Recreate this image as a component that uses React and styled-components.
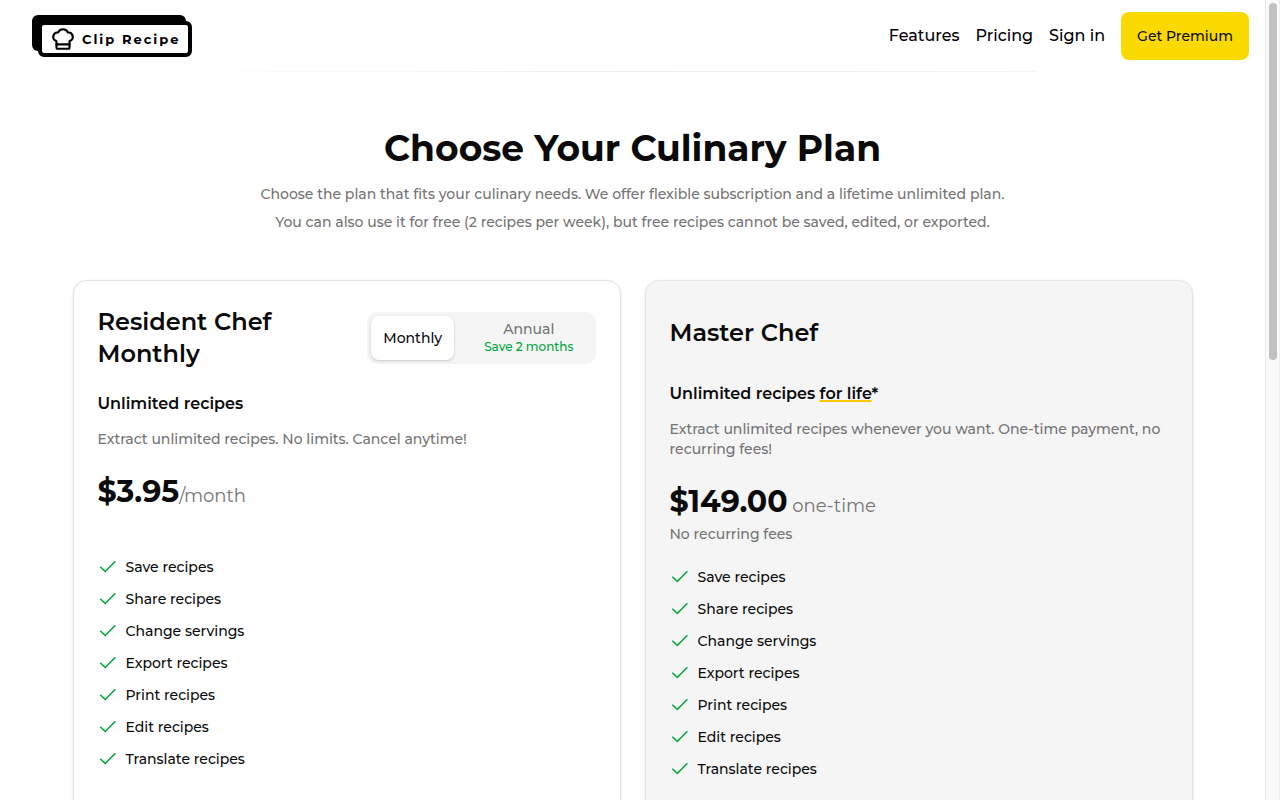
import { useState } from "react";
import styled, { createGlobalStyle } from "styled-components";
import { ChefHat } from "lucide-react";

const GlobalStyle = createGlobalStyle`
  * {
    box-sizing: border-box;
  }

  body {
    margin: 0;
    background-color: #ffffff;
    color: #0a0a0a;
    font-family: Montserrat, Inter, "Liberation Sans", sans-serif;
    font-size: 14px;
    font-weight: 500;
  }

  h1, h2, h3, p, ul {
    margin: 0;
    padding: 0;
  }

  a {
    color: inherit;
    text-decoration: none;
  }
`;

const Page = styled.div`
  display: flex;
  height: 100vh;
  overflow: hidden;
`;

const Content = styled.div`
  flex: 1;
  min-width: 0;
  overflow: hidden;
`;

const ScrollTrack = styled.div`
  width: 15px;
  padding: 3px;
  border-left: 1px solid #e8e8e8;
  border-right: 1px solid #f0f0f0;
  background-color: #fafafa;
`;

const ScrollThumb = styled.div`
  width: 8px;
  height: 45%;
  border-radius: 4px;
  background-color: #c1c1c1;
`;

const Header = styled.header`
  display: flex;
  justify-content: space-between;
  align-items: center;
  height: 71px;
  padding: 0 16px 0 32px;
`;

const Logo = styled.a`
  display: flex;
  align-items: center;
  gap: 6px;
  height: 36px;
  margin: 6px 0 0 6px;
  padding: 0 8px;
  border: 4px solid #000000;
  border-radius: 6px;
  background-color: #ffffff;
  box-shadow: -6px -6px 0 #000000;
  color: #000000;
  font-size: 13px;
  font-weight: 700;
  letter-spacing: 2px;
  white-space: nowrap;
`;

const Nav = styled.nav`
  display: flex;
  align-items: center;
  column-gap: 16px;
  color: #000000;
  font-size: 16px;
  line-height: 22px;
`;

const PremiumButton = styled.button`
  height: 48px;
  padding: 0 16px;
  border: none;
  border-radius: 8px;
  background-color: #fad900;
  color: #0a0a0a;
  font: inherit;
  font-size: 14px;
`;

const Divider = styled.div`
  width: 64%;
  height: 1px;
  margin: 0 auto;
  background: linear-gradient(to right, #fcfcfc, #eeeeee 50%, #f4f4f4);
`;

const Intro = styled.section`
  padding: 52px 24px 44px;
  text-align: center;
`;

const Title = styled.h1`
  font-size: 36px;
  font-weight: 700;
  line-height: 48px;
`;

const Subtitle = styled.p`
  margin-top: 8px;
  color: #737373;
  line-height: 28px;
`;

const Plans = styled.main`
  display: grid;
  grid-template-columns: 1fr 1fr;
  gap: 24px;
  max-width: 1120px;
  margin: 0 auto;
`;

const Card = styled.section`
  padding: 25px 24px 96px;
  border: 1px solid #e5e5e5;
  border-radius: 14px;
  background-color: ${({ $muted }) => ($muted ? "#f5f5f5" : "#ffffff")};
  box-shadow: 0 1px 3px rgba(0, 0, 0, 0.12);
`;

const CardHeader = styled.div`
  display: flex;
  justify-content: space-between;
  align-items: center;
  column-gap: 24px;
  min-height: 54px;
`;

const PlanName = styled.h2`
  max-width: 200px;
  font-size: 24px;
  font-weight: 600;
  line-height: 32px;
`;

const Toggle = styled.div`
  display: flex;
  height: 52px;
  padding: 4px;
  border-radius: 10px;
  background-color: #f5f5f5;
`;

const ToggleButton = styled.button`
  display: flex;
  flex-direction: column;
  justify-content: center;
  align-items: center;
  padding: 0 ${({ $wide }) => ($wide ? "18px 0 30px" : "12px")};
  border: none;
  border-radius: 8px;
  background-color: ${({ $active }) => ($active ? "#ffffff" : "transparent")};
  box-shadow: ${({ $active }) =>
    $active ? "0 1px 3px rgba(0, 0, 0, 0.18)" : "none"};
  color: ${({ $active }) => ($active ? "#0a0a0a" : "#737373")};
  font: inherit;
  line-height: 18px;
  white-space: nowrap;
`;

const Saving = styled.span`
  color: #00a63e;
  font-size: 12px;
`;

const Summary = styled.h3`
  margin-top: 22px;
  font-size: 16px;
  font-weight: 600;
  line-height: 24px;
`;

const Highlight = styled.span`
  text-decoration: underline 2px #fcc800;
  text-underline-offset: 1px;
`;

const Description = styled.p`
  margin-top: 13px;
  color: #737373;
  line-height: 20px;
`;

const Price = styled.p`
  margin-top: 25px;
  font-size: 30px;
  font-weight: 700;
  line-height: 36px;
`;

const Period = styled.span`
  color: #737373;
  font-size: 18px;
  font-weight: 400;
`;

const Note = styled.p`
  min-height: 20px;
  color: #737373;
  line-height: 20px;
`;

const FeatureList = styled.ul`
  display: grid;
  row-gap: 12px;
  margin-top: 23px;
  list-style: none;
`;

const Feature = styled.li`
  display: flex;
  align-items: center;
  column-gap: 8px;
  line-height: 20px;
`;

const CheckIcon = () => (
  <svg width="20" height="20" viewBox="0 0 20 20" fill="none" aria-hidden="true">
    <path
      d="M2.9 10.2 7.2 14.5 16.9 4.8"
      stroke="#00a63e"
      strokeWidth="1.6"
      strokeLinecap="round"
      strokeLinejoin="round"
    />
  </svg>
);

const FEATURES = [
  "Save recipes",
  "Share recipes",
  "Change servings",
  "Export recipes",
  "Print recipes",
  "Edit recipes",
  "Translate recipes",
];

const Features = () => (
  <FeatureList>
    {FEATURES.map((feature) => (
      <Feature key={feature}>
        <CheckIcon />
        {feature}
      </Feature>
    ))}
  </FeatureList>
);

const App = () => {
  const [billing, setBilling] = useState("Monthly");

  return (
    <Page>
      <GlobalStyle />
      <Content>
        <Header>
          <Logo href="#">
            <ChefHat size={26} strokeWidth={2} aria-hidden="true" />
            Clip Recipe
          </Logo>
          <Nav>
            <a href="#features">Features</a>
            <a href="#pricing">Pricing</a>
            <a href="#signin">Sign in</a>
            <PremiumButton type="button">Get Premium</PremiumButton>
          </Nav>
        </Header>
        <Divider />
        <Intro>
          <Title>Choose Your Culinary Plan</Title>
          <Subtitle>
            Choose the plan that fits your culinary needs. We offer flexible
            subscription and a lifetime unlimited plan.
            <br />
            You can also use it for free (2 recipes per week), but free recipes
            cannot be saved, edited, or exported.
          </Subtitle>
        </Intro>
        <Plans>
          <Card>
            <CardHeader>
              <PlanName>Resident Chef {billing}</PlanName>
              <Toggle>
                <ToggleButton
                  type="button"
                  $active={billing === "Monthly"}
                  onClick={() => setBilling("Monthly")}
                >
                  Monthly
                </ToggleButton>
                <ToggleButton
                  type="button"
                  $wide
                  $active={billing === "Annual"}
                  onClick={() => setBilling("Annual")}
                >
                  Annual
                  <Saving>Save 2 months</Saving>
                </ToggleButton>
              </Toggle>
            </CardHeader>
            <Summary>Unlimited recipes</Summary>
            <Description>
              Extract unlimited recipes. No limits. Cancel anytime!
            </Description>
            <Price>
              $3.95<Period>/month</Period>
            </Price>
            <Note />
            <Features />
          </Card>
          <Card $muted>
            <CardHeader>
              <PlanName>Master Chef</PlanName>
            </CardHeader>
            <Summary>
              Unlimited recipes <Highlight>for life</Highlight>*
            </Summary>
            <Description>
              Extract unlimited recipes whenever you want. One-time payment, no
              recurring fees!
            </Description>
            <Price>
              $149.00<Period> one-time</Period>
            </Price>
            <Note>No recurring fees</Note>
            <Features />
          </Card>
        </Plans>
      </Content>
      <ScrollTrack>
        <ScrollThumb />
      </ScrollTrack>
    </Page>
  );
};

export default App;
